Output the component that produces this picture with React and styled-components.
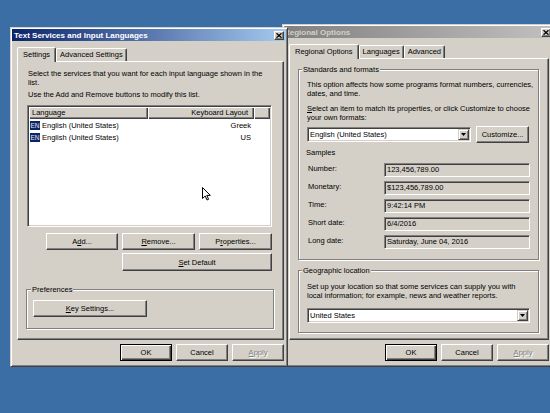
import React from 'react';
import styled, { createGlobalStyle } from 'styled-components';

const GlobalStyle = createGlobalStyle`
    html, body {
        margin: 0;
        padding: 0;
    }
    body {
        background: #3a6ea5;
        font-family: "Liberation Sans", Arial, sans-serif;
        font-size: 7.5px;
        color: #000;
    }
`;

const App = () => {
    return (
        <Desktop>
            <GlobalStyle />

            <Window $x={10} $y={27} $w={278} $h={340} $z={2}>
                <TitleBar $active $pl={2}>
                    <TitleText $active>Text Services and Input Languages</TitleText>
                    <CloseButton><CloseGlyph /></CloseButton>
                </TitleBar>
                <Body $pl={5} $pr={2}>
                    <TabStrip>
                        <Tab $active>Settings</Tab>
                        <Tab>Advanced Settings</Tab>
                    </TabStrip>
                    <TabPanel $h={279} $pad="7px 10px 0 10px">
                        <Para>
                            Select the services that you want for each input language shown in the<br />list.
                        </Para>
                        <Para $mt={3}>Use the Add and Remove buttons to modify this list.</Para>

                        <ListView>
                            <HeaderRow>
                                <HeaderCell $w={119}>Language</HeaderCell>
                                <HeaderCell $w={106} $right>Keyboard Layout</HeaderCell>
                                <HeaderCell $grow />
                            </HeaderRow>
                            {languages.map((lang, index) => (
                                <ListRow key={index}>
                                    <ListCell $w={119}>
                                        <LangBadge>EN</LangBadge>
                                        <span>{lang.name}</span>
                                    </ListCell>
                                    <ListCell $w={106} $right>{lang.layout}</ListCell>
                                </ListRow>
                            ))}
                        </ListView>

                        <ButtonRow $w={245} $mt={6} $ml={-1}>
                            <Button $w={72}>A<u>d</u>d...</Button>
                            <Button $w={73}><u>R</u>emove...</Button>
                            <Button $w={73}>P<u>r</u>operties...</Button>
                        </ButtonRow>
                        <ButtonRow $w={245} $mt={3} $ml={-1}>
                            <Button $w={150} $h={18}><u>S</u>et Default</Button>
                        </ButtonRow>

                        <GroupBox $w={248} $mt={14} $ml={-2} $pad="6px 0 11px 6px">
                            <GroupLabel $ml={-2}>Preferences</GroupLabel>
                            <Button $w={114}><u>K</u>ey Settings...</Button>
                        </GroupBox>
                    </TabPanel>
                    <ButtonRow $mt={4}>
                        <Button $w={52} $default>OK</Button>
                        <Button $w={52}>Cancel</Button>
                        <Button $w={52} disabled><u>A</u>pply</Button>
                    </ButtonRow>
                </Body>
            </Window>

            <Window $x={282} $y={24} $w={273} $h={343} $z={1}>
                <TitleBar $pl={0}>
                    <TitleText>Regional Options</TitleText>
                    <CloseButton><CloseGlyph /></CloseButton>
                </TitleBar>
                <Body $pl={5} $pr={4}>
                    <TabStrip>
                        <Tab $active>Regional Options</Tab>
                        <Tab>Languages</Tab>
                        <Tab>Advanced</Tab>
                    </TabStrip>
                    <TabPanel $h={282} $pad="6px 9px 0 8px">
                        <GroupBox $w={241} $pad="6px 8px 10px 8px">
                            <GroupLabel $ml={-5}>Standards and formats</GroupLabel>
                            <Para>
                                This option affects how some programs format numbers, currencies,<br />
                                dates, and time.
                            </Para>
                            <Para $mt={6}>
                                <u>S</u>elect an item to match its properties, or click Customize to choose<br />
                                your own formats:
                            </Para>
                            <ComboRow>
                                <Combo $w={164}>
                                    <ComboValue>English (United States)</ComboValue>
                                    <ComboArrow><ArrowGlyph /></ComboArrow>
                                </Combo>
                                <Button $w={53}>Customize...</Button>
                            </ComboRow>
                            <Para $mt={5} $ml={-1}>Samples</Para>
                            <SampleList>
                                {samples.map((s) => (
                                    <SampleRow key={s.label}>
                                        <SampleLabel>{s.label}</SampleLabel>
                                        <SampleField>{s.value}</SampleField>
                                    </SampleRow>
                                ))}
                            </SampleList>
                        </GroupBox>

                        <GroupBox $w={241} $mt={6} $pad="7px 8px 9px 8px">
                            <GroupLabel $ml={-5}>Geographic location</GroupLabel>
                            <Para>
                                Set up your location so that some services can supply you with<br />
                                local information; for example, news and weather reports.
                            </Para>
                            <Combo $w={223} $mt={8}>
                                <ComboValue>United States</ComboValue>
                                <ComboArrow><ArrowGlyph /></ComboArrow>
                            </Combo>
                        </GroupBox>
                    </TabPanel>
                    <ButtonRow $mt={4}>
                        <Button $w={52} $default>OK</Button>
                        <Button $w={52}>Cancel</Button>
                        <Button $w={52} disabled><u>A</u>pply</Button>
                    </ButtonRow>
                </Body>
            </Window>

            <Cursor width="10" height="14" viewBox="0 0 10 14">
                <path d="M0.5 0.5 L0.5 11.5 L3.2 9 L5 13 L6.6 12.3 L4.8 8.4 L8.3 8.4 Z" fill="#fff" stroke="#000" strokeWidth="1" strokeLinejoin="miter" />
            </Cursor>
        </Desktop>
    );
}

const languages = [
    { name: 'English (United States)', layout: 'Greek' },
    { name: 'English (United States)', layout: 'US' },
];

const samples = [
    { label: 'Number:', value: '123,456,789.00' },
    { label: 'Monetary:', value: '$123,456,789.00' },
    { label: 'Time:', value: '9:42:14 PM' },
    { label: 'Short date:', value: '6/4/2016' },
    { label: 'Long date:', value: 'Saturday, June 04, 2016' },
];

const CloseGlyph = () => (
    <svg width="6" height="5" viewBox="0 0 6 5">
        <path d="M0.5 0.3 L5.5 4.7 M5.5 0.3 L0.5 4.7" stroke="#000" strokeWidth="1.3" />
    </svg>
);

const ArrowGlyph = () => (
    <svg width="5" height="3" viewBox="0 0 5 3">
        <polygon points="0,0 5,0 2.5,3" fill="#000" />
    </svg>
);

const Desktop = styled.div`
    position: relative;
    width: 550px;
    height: 413px;
    overflow: hidden;
    background: #3a6ea5;
`;

const Window = styled.div`
    position: absolute;
    left: ${p => p.$x}px;
    top: ${p => p.$y}px;
    width: ${p => p.$w}px;
    height: ${p => p.$h}px;
    z-index: ${p => p.$z};
    box-sizing: border-box;
    display: flex;
    flex-direction: column;
    padding: 1px;
    background: #d4d0c8;
    border: 1px solid;
    border-color: #d4d0c8 #404040 #404040 #d4d0c8;
    box-shadow: inset 1px 1px #fff, inset -1px -1px #808080;
`;

const TitleBar = styled.div`
    flex: none;
    height: 12px;
    display: flex;
    align-items: center;
    justify-content: space-between;
    padding: 0 2px 0 ${p => p.$pl}px;
    background: ${p => p.$active
        ? 'linear-gradient(90deg, #0a246a, #a6caf0)'
        : 'linear-gradient(90deg, #808080, #c0c0c0)'};
`;

const TitleText = styled.span`
    font-size: 8px;
    font-weight: bold;
    white-space: nowrap;
    color: ${p => p.$active ? '#fff' : '#d4d0c8'};
`;

const CloseButton = styled.div`
    width: 10px;
    height: 9px;
    box-sizing: border-box;
    display: flex;
    align-items: center;
    justify-content: center;
    background: #d4d0c8;
    border: 1px solid;
    border-color: #fff #404040 #404040 #fff;
    box-shadow: inset -1px -1px #808080;
`;

const Body = styled.div`
    flex: 1;
    display: flex;
    flex-direction: column;
    padding: 6px ${p => p.$pr}px 0 ${p => p.$pl}px;
`;

const TabStrip = styled.div`
    position: relative;
    z-index: 1;
    height: 14px;
    display: flex;
    align-items: flex-end;
`;

const Tab = styled.div`
    height: ${p => p.$active ? 15 : 13}px;
    margin-bottom: ${p => p.$active ? -1 : 0}px;
    box-sizing: border-box;
    padding: 0 ${p => p.$active ? 5 : 3}px 1px;
    display: flex;
    align-items: center;
    white-space: nowrap;
    background: #d4d0c8;
    border: 1px solid;
    border-bottom: none;
    border-color: #fff #404040 #404040 #fff;
    border-radius: 2px 2px 0 0;
    box-shadow: inset -1px 0 #808080;
`;

const TabPanel = styled.div`
    height: ${p => p.$h}px;
    box-sizing: border-box;
    padding: ${p => p.$pad};
    display: flex;
    flex-direction: column;
    align-items: flex-start;
    border: 1px solid;
    border-color: #fff #404040 #404040 #fff;
    box-shadow: inset -1px -1px #808080;
`;

const Para = styled.p`
    margin: ${p => p.$mt || 0}px 0 0 ${p => p.$ml || 0}px;
    line-height: 9px;
    white-space: nowrap;
`;

const ListView = styled.div`
    width: 245px;
    height: 122px;
    margin: 6px 0 0 -1px;
    box-sizing: border-box;
    padding: 1px;
    background: #fff;
    border: 1px solid;
    border-color: #808080 #fff #fff #808080;
    box-shadow: inset 1px 1px #404040, inset -1px -1px #d4d0c8;
`;

const HeaderRow = styled.div`
    display: flex;
    height: 12px;
`;

const HeaderCell = styled.div`
    ${p => p.$grow ? 'flex: 1;' : `width: ${p.$w}px;`}
    box-sizing: border-box;
    padding: 0 ${p => p.$right ? 6 : 3}px 0 3px;
    line-height: 12px;
    text-align: ${p => p.$right ? 'right' : 'left'};
    background: #d4d0c8;
    box-shadow: inset 1px 1px #fff, inset -1px -1px #404040, inset -2px -2px #808080;
`;

const ListRow = styled.div`
    display: flex;
    align-items: center;
    height: 11px;
    margin-top: 1px;
`;

const ListCell = styled.div`
    width: ${p => p.$w}px;
    box-sizing: border-box;
    display: flex;
    align-items: center;
    justify-content: ${p => p.$right ? 'flex-end' : 'flex-start'};
    padding: 0 ${p => p.$right ? 3 : 0}px 0 1px;
    white-space: nowrap;
`;

const LangBadge = styled.span`
    width: 10px;
    height: 9px;
    margin-right: 2px;
    display: inline-flex;
    align-items: center;
    justify-content: center;
    font-size: 6.5px;
    color: #e8e8f0;
    background: #0a246a;
`;

const ButtonRow = styled.div`
    display: flex;
    justify-content: flex-end;
    gap: 4px;
    ${p => p.$w ? `width: ${p.$w}px;` : 'align-self: stretch;'}
    margin: ${p => p.$mt || 0}px 0 0 ${p => p.$ml || 0}px;
`;

const Button = styled.button`
    width: ${p => p.$w}px;
    height: ${p => p.$h || 17}px;
    flex: none;
    box-sizing: border-box;
    padding: 0;
    font-family: inherit;
    font-size: 7.5px;
    color: ${p => p.disabled ? '#808080' : '#000'};
    text-shadow: ${p => p.disabled ? '1px 1px #fff' : 'none'};
    background: #d4d0c8;
    border: 1px solid;
    border-color: ${p => p.$default ? '#000' : '#fff #404040 #404040 #fff'};
    box-shadow: ${p => p.$default
        ? 'inset 1px 1px #fff, inset -1px -1px #404040, inset -2px -2px #808080'
        : 'inset -1px -1px #808080'};
`;

const GroupBox = styled.fieldset`
    width: ${p => p.$w}px;
    min-width: 0;
    box-sizing: border-box;
    margin: ${p => p.$mt || 0}px 0 0 ${p => p.$ml || 0}px;
    padding: ${p => p.$pad};
    border: 1px solid #808080;
    box-shadow: inset 1px 1px #fff, 1px 1px #fff;
    display: flex;
    flex-direction: column;
    align-items: flex-start;
`;

const GroupLabel = styled.legend`
    margin-left: ${p => p.$ml}px;
    padding: 0 1px;
    line-height: 9px;
    background: #d4d0c8;
`;

const ComboRow = styled.div`
    display: flex;
    align-items: center;
    gap: 5px;
    margin-top: 4px;
    height: 17px;
`;

const Combo = styled.div`
    width: ${p => p.$w}px;
    height: 15px;
    margin-top: ${p => p.$mt || 0}px;
    box-sizing: border-box;
    display: flex;
    align-items: center;
    padding: 1px;
    background: #fff;
    border: 1px solid;
    border-color: #808080 #fff #fff #808080;
    box-shadow: inset 1px 1px #404040, inset -1px -1px #d4d0c8;
`;

const ComboValue = styled.span`
    flex: 1;
    padding-left: 1px;
    white-space: nowrap;
`;

const ComboArrow = styled.div`
    width: 11px;
    height: 11px;
    box-sizing: border-box;
    display: flex;
    align-items: center;
    justify-content: center;
    background: #d4d0c8;
    border: 1px solid;
    border-color: #d4d0c8 #404040 #404040 #d4d0c8;
    box-shadow: inset 1px 1px #fff, inset -1px -1px #808080;
`;

const SampleList = styled.div`
    display: flex;
    flex-direction: column;
    gap: 4px;
    margin-top: 6px;
`;

const SampleRow = styled.div`
    display: flex;
    align-items: flex-start;
    margin-left: 1px;
`;

const SampleLabel = styled.span`
    width: 76px;
    line-height: 11px;
`;

const SampleField = styled.div`
    width: 146px;
    height: 14px;
    box-sizing: border-box;
    padding: 0 2px;
    line-height: 12px;
    white-space: nowrap;
    background: #d4d0c8;
    border: 1px solid;
    border-color: #808080 #fff #fff #808080;
    box-shadow: inset 1px 1px #404040, inset -1px -1px #d4d0c8;
`;

const Cursor = styled.svg`
    position: absolute;
    left: 202px;
    top: 187px;
    z-index: 5;
`;

export default App;
